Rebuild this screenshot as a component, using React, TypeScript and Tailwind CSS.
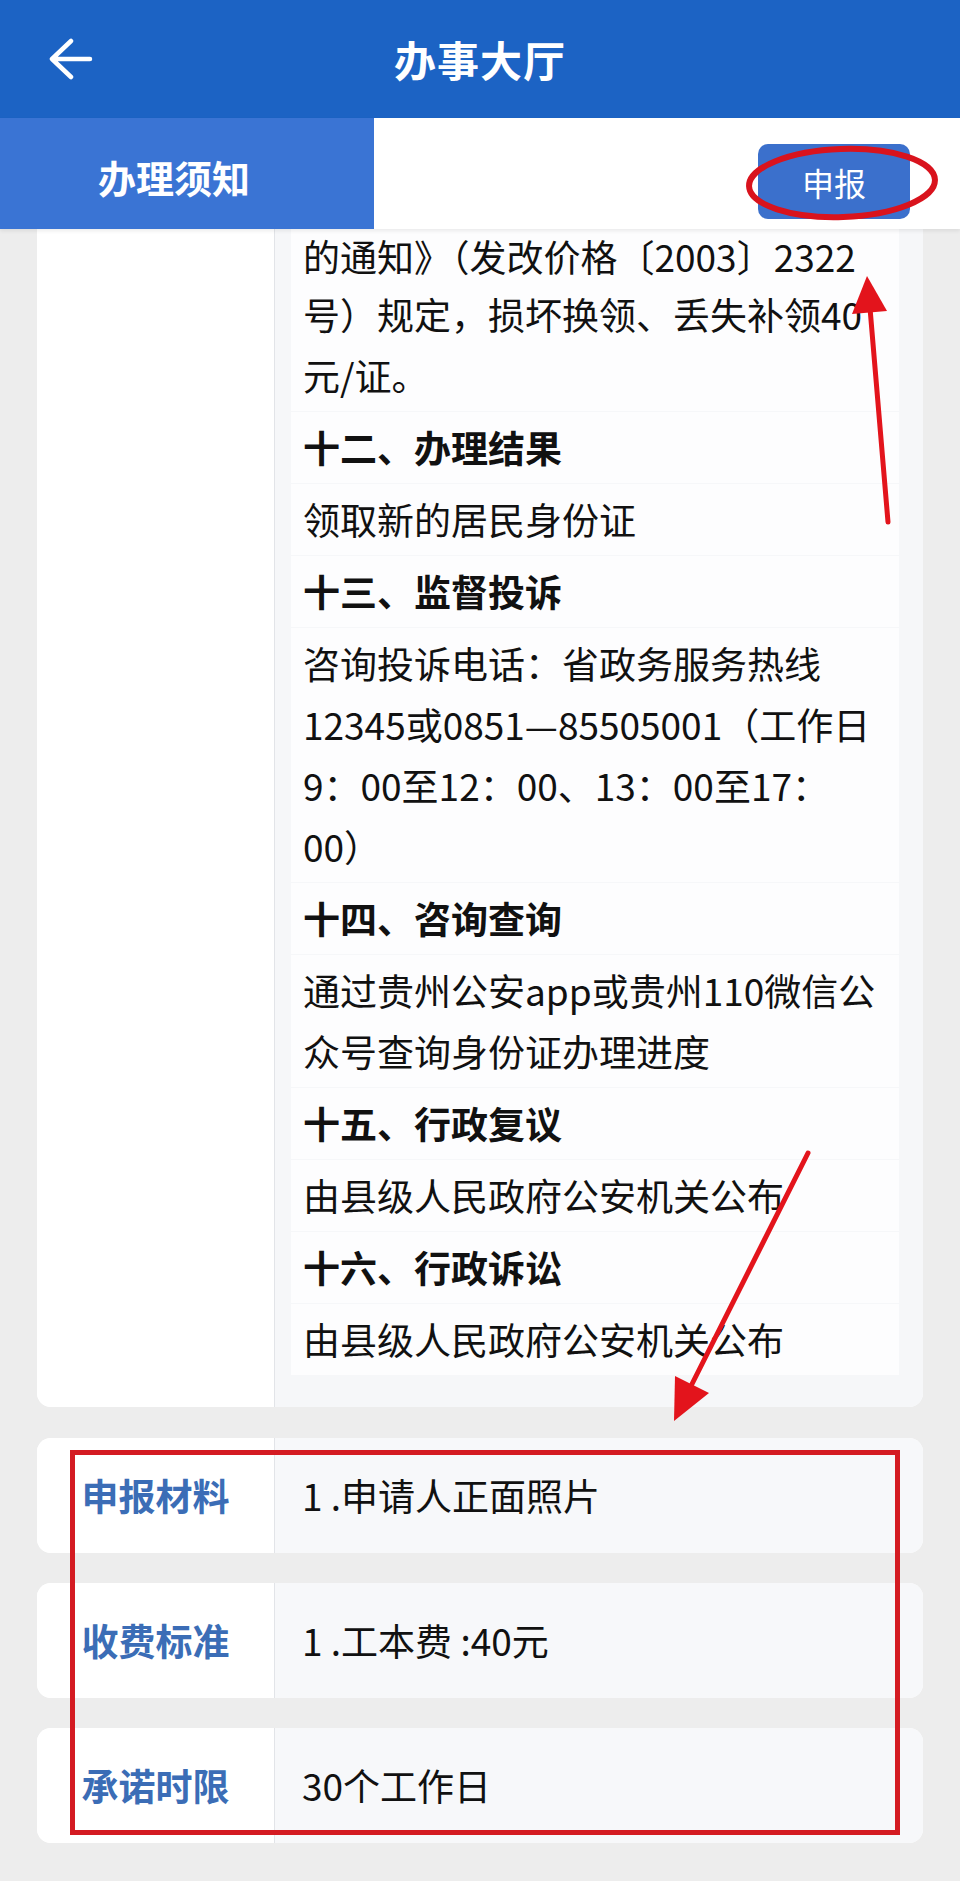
import React from "react";

const FONT = { fontFamily: '"Noto Sans CJK SC", "Noto Sans", sans-serif' };

type Row = { title?: string; lines?: string[] };

const rows: Row[] = [
  { lines: ["的通知》（发改价格〔2003〕2322", "号）规定，损坏换领、丢失补领40", "元/证。"] },
  { title: "十二、办理结果" },
  { lines: ["领取新的居民身份证"] },
  { title: "十三、监督投诉" },
  { lines: ["咨询投诉电话：省政务服务热线", "12345或0851—85505001（工作日", "9：00至12：00、13：00至17：", "00）"] },
  { title: "十四、咨询查询" },
  { lines: ["通过贵州公安app或贵州110微信公", "众号查询身份证办理进度"] },
  { title: "十五、行政复议" },
  { lines: ["由县级人民政府公安机关公布"] },
  { title: "十六、行政诉讼" },
  { lines: ["由县级人民政府公安机关公布"] },
];

const infos = [
  { label: "申报材料", value: "1 .申请人正面照片" },
  { label: "收费标准", value: "1 .工本费 :40元" },
  { label: "承诺时限", value: "30个工作日" },
];

function Annotations() {
  return (
    <svg className="absolute inset-0 z-20 pointer-events-none" width={960} height={1881} viewBox="0 0 960 1881">
      <ellipse cx={842} cy={183} rx={93} ry={34} fill="none" stroke="#d9131d" strokeWidth={6} transform="rotate(-2 842 183)" />
      <line x1={888} y1={522} x2={870} y2={308} stroke="#e3141c" strokeWidth={5} strokeLinecap="round" />
      <polygon points="867,276 887,311 852,314" fill="#e3141c" />
      <line x1={808} y1={1153} x2={690} y2={1388} stroke="#e3141c" strokeWidth={5} strokeLinecap="round" />
      <polygon points="674,1421 709,1393 675,1376" fill="#e3141c" />
      <rect x={72.5} y={1452.5} width={825} height={380} fill="none" stroke="#d41b22" strokeWidth={5} />
    </svg>
  );
}

export default function App() {
  return (
    <div className="relative w-[960px] min-h-[1881px] bg-[#ededed] pb-[38px]" style={FONT}>
      {/* top bar */}
      <div className="relative h-[118px] bg-[#1c63c4] flex items-center justify-center">
        <svg className="absolute left-[48px] top-[38px]" width={46} height={42} viewBox="0 0 46 42">
          <path d="M42 21H5M23 3L4 21l19 18" fill="none" stroke="#fff" strokeWidth={4.5} strokeLinecap="round" strokeLinejoin="round" />
        </svg>
        <h1 className="text-white text-[42px] font-bold leading-none tracking-[1px]">办事大厅</h1>
      </div>

      {/* tabs */}
      <div className="relative z-10 h-[111px] flex bg-white shadow-[0_2px_4px_rgba(0,0,0,0.08)]">
        <div className="w-[374px] bg-[#3a74d4] flex items-center justify-center pr-[26px] pt-[6px]">
          <span className="text-white text-[38px] font-bold">办理须知</span>
        </div>
        <div className="flex-1 flex justify-end items-start pt-[26px] pr-[50px]">
          <button className="w-[152px] h-[75px] rounded-[10px] bg-[#3b70cc] text-white text-[32px] leading-none">申报</button>
        </div>
      </div>

      {/* notice card, scrolled so its top is under the tabs */}
      <div className="mx-[37px] flex overflow-hidden rounded-b-[14px] bg-white">
        <div className="w-[238px] shrink-0 bg-white border-r border-[#e2e4e8]" />
        <div className="flex-1 bg-[#f6f7f9] pl-[16px] pr-[24px] pb-[32px]">
          <div className="flex flex-col gap-[1px]">
            {rows.map((r, i) => (
              <div key={i} className={`bg-[#fdfdfe] px-[12px] text-[37px] leading-[61px] text-[#111] ${i === 0 ? "pb-[5px]" : "py-[5px]"}`}>
                {r.title ? (
                  <div className="font-bold whitespace-nowrap">{r.title}</div>
                ) : (
                  r.lines!.map((l, j) => (
                    <div key={j} className={i === 0 && j === 0 ? "whitespace-nowrap leading-[54px] mb-[1px]" : "whitespace-nowrap"}>{l}</div>
                  ))
                )}
              </div>
            ))}
          </div>
        </div>
      </div>

      {/* info cards */}
      <div className="mt-[31px] mx-[37px] flex flex-col gap-[30px]">
        {infos.map(it => (
          <div key={it.label} className="h-[115px] flex rounded-[14px] overflow-hidden bg-white">
            <div className="w-[238px] shrink-0 bg-white border-r border-[#e2e4e8] flex items-center justify-center">
              <span className="text-[37px] font-bold text-[#3b6db6]">{it.label}</span>
            </div>
            <div className="flex-1 bg-[#f7f8fa] flex items-center pl-[27px]">
              <span className="text-[37px] text-[#111] whitespace-nowrap">{it.value}</span>
            </div>
          </div>
        ))}
      </div>

      <Annotations />
    </div>
  );
}
